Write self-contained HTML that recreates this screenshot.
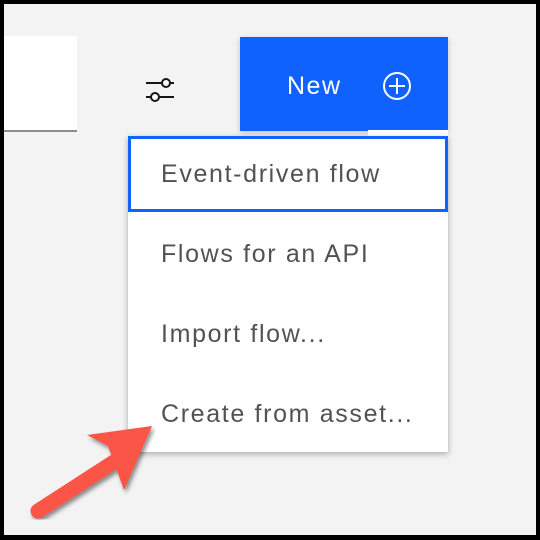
<!DOCTYPE html>
<html><head><style>
body{margin:0;width:540px;height:540px;overflow:hidden;background:#000;font-family:"Liberation Sans",sans-serif}
#f{position:absolute;left:4px;top:4px;width:532px;height:531px;background:#f3f3f3;overflow:hidden}
.a{position:absolute}
.it{position:absolute;left:128px;width:320px;height:80px;line-height:80px;font-size:25px;color:#525252;padding-left:33px;box-sizing:border-box;letter-spacing:1.65px;white-space:nowrap}
</style></head><body>
<div id="f">
<div class="a" style="left:0;top:32px;width:73px;height:94px;background:#fff;border-bottom:2px solid #8d8d8d"></div>
<svg class="a" style="left:140px;top:68px" width="36" height="30" viewBox="0 0 36 30">
<g stroke="#161616" stroke-width="2" fill="#fff"><line x1="2" y1="11" x2="30" y2="11"/><line x1="2" y1="25" x2="30" y2="25"/><circle cx="22" cy="11" r="4"/><circle cx="11" cy="25" r="4"/></g></svg>
<div class="a" style="left:236px;top:33px;width:208px;height:94px;background:#0f62fe;box-shadow:0 2px 6px rgba(0,0,0,.2)"></div>
<div class="a" style="left:283px;top:68px;font-size:25px;color:#fff;letter-spacing:1.5px">New</div>
<svg class="a" style="left:378px;top:67px" width="30" height="30" viewBox="0 0 30 30"><g stroke="#fff" stroke-width="2" fill="none"><circle cx="15" cy="15" r="13"/><line x1="15" y1="7" x2="15" y2="23"/><line x1="7" y1="15" x2="23" y2="15"/></g></svg>
<div class="a" style="left:364px;top:126px;width:80px;height:8px;background:#fff"></div>
<div class="a" style="left:124px;top:132px;width:320px;height:316px;background:#fff;box-shadow:0 2px 6px rgba(0,0,0,.3)"></div>
<div class="a" style="left:124px;top:132px;width:320px;height:76px;box-sizing:border-box;border:3px solid #0f62fe"></div>
<div class="it" style="left:124px;top:130px">Event-driven flow</div>
<div class="it" style="left:124px;top:210px">Flows for an API</div>
<div class="it" style="left:124px;top:290px">Import flow...</div>
<div class="it" style="left:124px;top:370px">Create from asset...</div>
<svg class="a" style="left:0;top:0" width="532" height="531" viewBox="4 4 532 531">
<defs><filter id="s"><feDropShadow dx="2" dy="3" stdDeviation="2" flood-opacity=".45"/></filter></defs>
<g filter="url(#s)" fill="#fa5546"><line x1="38" y1="511" x2="120" y2="458" stroke="#fa5546" stroke-width="15" stroke-linecap="round"/>
<polygon points="152,426 87,435 108,446 124,490"/></g></svg>
</div>
</body></html>
